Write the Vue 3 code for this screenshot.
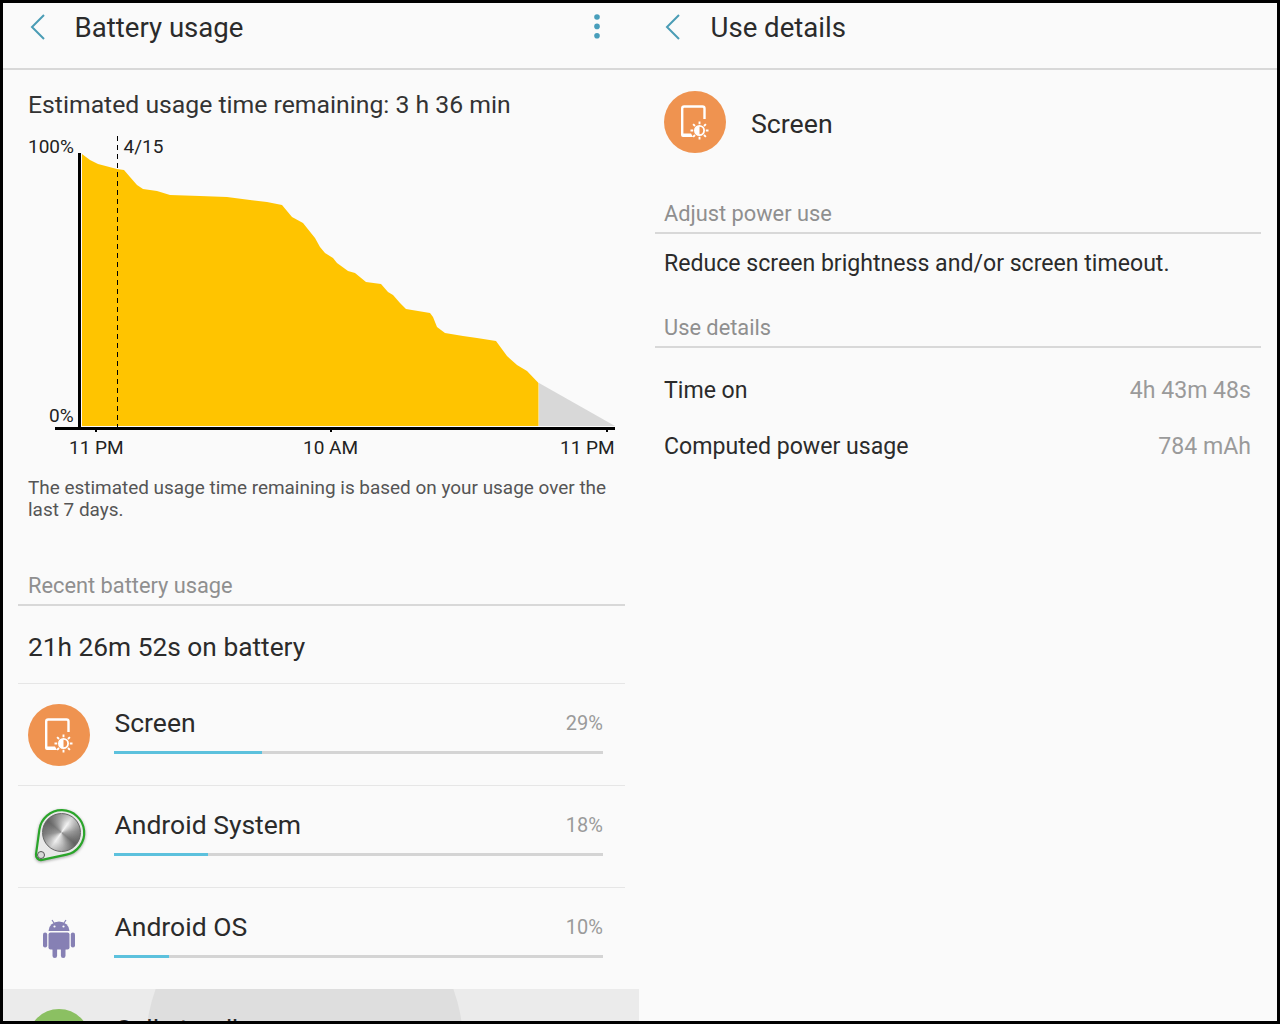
<script setup>
const rows = [
  { name: 'Screen', pct: '29%', w: 148, icon: 'screen' },
  { name: 'Android System', pct: '18%', w: 94, icon: 'system' },
  { name: 'Android OS', pct: '10%', w: 55, icon: 'os' }
]
const yellow = '82,154 90,160 98,164 117,169 124,170 130,177 137,185 143,189 157,191 170,195 200,196 227,197 250,200 267,202 282,205 292,217 303,223 315,238 320,247 325,253 333,258 337,263 348,271 355,273 366,282 381,284 388,292 393,295 400,303 406,309 430,313 433,317 437,327 445,333 463,336 477,338 496,341 507,356 517,365 527,371 538.5,383 538.5,426 82,426'
</script>

<template>
  <div class="frame">
    <section class="pane left">
      <header class="bar">
        <svg class="back" width="16" height="26" viewBox="0 0 16 26"><path d="M14 1 L2 13 L14 25" fill="none" stroke="#4a9cb5" stroke-width="2"/></svg>
        <h1 class="title">Battery usage</h1>
        <svg class="more" width="6" height="25" viewBox="0 0 6 25"><circle cx="3" cy="3" r="2.8" fill="#489ebb"/><circle cx="3" cy="12.4" r="2.8" fill="#489ebb"/><circle cx="3" cy="21.8" r="2.8" fill="#489ebb"/></svg>
      </header>
      <p class="estimate">Estimated usage time remaining: 3 h 36 min</p>
      <div class="chart">
        <svg class="plot" width="636" height="310" viewBox="3 133 636 310">
          <polygon :points="yellow" fill="#ffc400"/>
          <polygon points="539,383 615,426 539,426" fill="#d8d8d8"/>
          <rect x="78" y="153" width="3" height="275" fill="#000"/>
          <rect x="55" y="427" width="560" height="3" fill="#000"/>
          <rect x="95" y="429" width="2" height="3" fill="#000"/>
          <rect x="330" y="429" width="2" height="3" fill="#000"/>
          <rect x="606" y="429" width="2" height="3" fill="#000"/>
          <line x1="117.5" y1="136" x2="117.5" y2="427" stroke="#000" stroke-width="1" stroke-dasharray="5 4"/>
        </svg>
        <span class="lbl l100">100%</span>
        <span class="lbl l0">0%</span>
        <span class="lbl ldate">4/15</span>
        <span class="lbl t1">11 PM</span>
        <span class="lbl t2">10 AM</span>
        <span class="lbl t3">11 PM</span>
      </div>
      <p class="note">The estimated usage time remaining is based on your usage over the last 7 days.</p>
      <div class="sect recent">Recent battery usage</div>
      <div class="onbat">21h 26m 52s on battery</div>
      <div v-for="r in rows" :key="r.name" class="row">
        <div class="ico">
          <svg v-if="r.icon === 'screen'" width="62" height="62" viewBox="0 0 62 62">
            <circle cx="31" cy="31" r="31" fill="#ef9350"/>
            <path d="M18.2 43 V17.5 a2 2 0 0 1 2-2 H38.5 a2 2 0 0 1 2 2 V28" fill="none" stroke="#fff" stroke-width="2.4"/>
            <path d="M17 41 V44 a2 2 0 0 0 2 2 H29 L27 42.5 H19 Z" fill="#fff"/>
            <circle cx="35.5" cy="39.5" r="4.6" fill="#ef9350" stroke="#fff" stroke-width="1.8"/>
            <path d="M35.5 35 a4.5 4.5 0 0 0 0 9 Z" fill="#fff"/>
            <path d="M35.5 30.5 V33.2 M35.5 45.8 V48.5 M26.5 39.5 H29.2 M41.8 39.5 H44.5 M29.1 33.1 L31 35 M40 44 L41.9 45.9 M29.1 45.9 L31 44 M40 35 L41.9 33.1" stroke="#fff" stroke-width="1.9"/>
          </svg>
          <div v-else-if="r.icon === 'system'" class="sys">
            <svg width="62" height="62" viewBox="0 0 62 62">
              <path class="hull" d="M11.4 23.7 A22.5 22.5 0 1 1 38.4 48.7 L14 53.9 A5 5 0 0 1 8 48.3 Z" fill="#e8e8e8" stroke="#2aa52a" stroke-width="2.2"/>
            </svg>
            <div class="disc"></div>
            <div class="knob"></div>
          </div>
          <svg v-else width="62" height="62" viewBox="0 0 62 62">
            <g fill="#8680b4">
              <path d="M20.5 23 a10.5 9.5 0 0 1 21 0 Z"/>
              <rect x="20.5" y="24.5" width="21" height="17" rx="2"/>
              <rect x="15" y="24.5" width="4.2" height="15" rx="2.1"/>
              <rect x="42.8" y="24.5" width="4.2" height="15" rx="2.1"/>
              <rect x="24.5" y="39" width="4.6" height="11" rx="2.3"/>
              <rect x="32.9" y="39" width="4.6" height="11" rx="2.3"/>
            </g>
            <path d="M24 12 L26 15 M38 12 L36 15" stroke="#8680b4" stroke-width="1.2"/>
            <circle cx="26.5" cy="18.5" r="1.1" fill="#fafafa"/><circle cx="35.5" cy="18.5" r="1.1" fill="#fafafa"/>
          </svg>
        </div>
        <div class="info">
          <div class="line"><span class="name">{{ r.name }}</span><span class="pct">{{ r.pct }}</span></div>
          <div class="track"><div class="fill" :style="{ width: r.w + 'px' }"></div></div>
        </div>
      </div>
      <div class="pressed">
        <div class="ripple"></div>
        <div class="greenic"></div>
        <span class="pname">Cell standby</span>
      </div>
    </section>

    <section class="pane right">
      <header class="bar">
        <svg class="back" width="16" height="26" viewBox="0 0 16 26"><path d="M14 1 L2 13 L14 25" fill="none" stroke="#4a9cb5" stroke-width="2"/></svg>
        <h1 class="title">Use details</h1>
      </header>
      <div class="apphead">
        <svg width="62" height="62" viewBox="0 0 62 62">
          <circle cx="31" cy="31" r="31" fill="#ef9350"/>
          <path d="M18.2 43 V17.5 a2 2 0 0 1 2-2 H38.5 a2 2 0 0 1 2 2 V28" fill="none" stroke="#fff" stroke-width="2.4"/>
          <path d="M17 41 V44 a2 2 0 0 0 2 2 H29 L27 42.5 H19 Z" fill="#fff"/>
          <circle cx="35.5" cy="39.5" r="4.6" fill="#ef9350" stroke="#fff" stroke-width="1.8"/>
          <path d="M35.5 35 a4.5 4.5 0 0 0 0 9 Z" fill="#fff"/>
          <path d="M35.5 30.5 V33.2 M35.5 45.8 V48.5 M26.5 39.5 H29.2 M41.8 39.5 H44.5 M29.1 33.1 L31 35 M40 44 L41.9 45.9 M29.1 45.9 L31 44 M40 35 L41.9 33.1" stroke="#fff" stroke-width="1.9"/>
        </svg>
        <span class="appname">Screen</span>
      </div>
      <div class="sect r1">Adjust power use</div>
      <p class="advice">Reduce screen brightness and/or screen timeout.</p>
      <div class="sect r2">Use details</div>
      <div class="kv first"><span>Time on</span><span class="val">4h 43m 48s</span></div>
      <div class="kv"><span>Computed power usage</span><span class="val">784 mAh</span></div>
    </section>
  </div>
</template>

<style>
html, body { margin: 0; background: #000; }
</style>

<style scoped>
.frame {
  box-sizing: border-box;
  width: 1280px;
  height: 1024px;
  background: #000;
  padding: 3px;
  display: flex;
  font-family: Roboto, "Liberation Sans", sans-serif;
  color: #222;
  overflow: hidden;
}
.pane { background: #fafafa; height: 1018px; overflow: hidden; position: relative; }
.left { width: 636px; }
.right { width: 638px; }
.bar {
  height: 65px;
  border-bottom: 2px solid #d8d8d8;
  display: flex;
  align-items: flex-start;
  position: relative;
}
.back { margin: 11px 0 0 27px; flex: none; }
.right .back { margin-left: 26px; }
.title { font-size: 27.6px; font-weight: 400; line-height: 32px; margin: 9px 0 0 28.5px; color: #2b2b2b; }
.right .title { margin-left: 29.5px; }
.more { position: absolute; left: 591px; top: 11px; }
.estimate { margin: 20px 0 0 25px; font-size: 24.75px; line-height: 30px; color: #333; }
.chart { position: relative; height: 310px; margin-top: 13px; }
.plot { position: absolute; left: 0; top: 0; }
.lbl { position: absolute; font-size: 19px; line-height: 22px; color: #222; white-space: nowrap; }
.l100 { left: 25px; top: 3px; }
.l0 { left: 46px; top: 272px; }
.ldate { left: 120.5px; top: 3px; }
.t1 { left: 66px; top: 304px; }
.t2 { left: 300px; top: 304px; }
.t3 { left: 557px; top: 304px; }
.note { margin: 34px 16px 0 25px; font-size: 18.95px; line-height: 22px; color: #555; }
.sect {
  margin: 0 14px 0 15px;
  font-size: 21.8px;
  line-height: 28px;
  color: #8f8f8f;
  border-bottom: 2px solid #d8d8d8;
  padding: 0 0 4px 10px;
}
.recent { margin-top: 51px; }
.onbat { margin: 0 14px 0 15px; padding-left: 10px; height: 77px; line-height: 83px; font-size: 26.3px; color: #2b2b2b; border-bottom: 1px solid #e6e6e6; }
.row { height: 101px; margin: 0 14px 0 15px; padding-left: 10px; border-bottom: 1px solid #e6e6e6; display: flex; align-items: flex-start; }
.ico { width: 62px; height: 62px; margin-top: 20px; flex: none; }
.sys { position: relative; width: 62px; height: 62px; filter: blur(.5px); }
.hull { filter: drop-shadow(0 1.5px 1.5px rgba(0, 0, 0, .35)); }
.disc {
  position: absolute;
  left: 14px;
  top: 7px;
  width: 39px;
  height: 39px;
  box-sizing: border-box;
  border-radius: 50%;
  border: 1px solid #666;
  background:
    radial-gradient(circle, rgba(255,255,255,.25) 0, rgba(255,255,255,0) 40%, rgba(0,0,0,.3) 100%),
    conic-gradient(from 0deg, #b8b8b8, #f3f3f3 35deg, #9a9a9a 85deg, #6f6f6f 130deg, #bdbdbd 175deg, #f0f0f0 215deg, #8d8d8d 265deg, #707070 310deg, #b8b8b8);
}
.knob {
  position: absolute;
  left: 9px;
  top: 45px;
  width: 8px;
  height: 8px;
  box-sizing: border-box;
  border-radius: 50%;
  border: 1.5px solid #555;
  background: #d9d9d9;
}
.info { margin-left: 24px; width: 489px; padding-top: 22px; }
.line { display: flex; justify-content: space-between; align-items: flex-start; height: 44px; }
.name { font-size: 26.5px; line-height: 34px; margin-left: .5px; color: #2b2b2b; }
.pct { font-size: 20px; line-height: 34px; color: #9a9a9a; }
.track { height: 3px; margin-top: .5px; background: #d4d4d4; }
.fill { height: 3px; background: #5cc1dd; }
.pressed { position: absolute; left: 0; right: 0; top: 986px; height: 40px; background: #ebebeb; overflow: hidden; }
.ripple { position: absolute; left: 143px; width: 317px; top: -104.5px; height: 317px; border-radius: 50%; background: #dedede; }
.greenic { position: absolute; left: 25px; top: 20px; width: 62px; height: 62px; border-radius: 50%; background: #8bc062; }
.pname { position: absolute; left: 112px; top: 22px; font-size: 26.5px; line-height: 36px; color: #2b2b2b; }
.apphead { display: flex; align-items: center; padding: 21px 0 0 25px; }
.appname { font-size: 26.7px; margin: 4px 0 0 25px; color: #2b2b2b; }
.r1 { margin: 47px 16px 0 16px; padding-left: 9px; }
.advice { margin: 0 0 0 25px; font-size: 23.1px; line-height: 28px; padding-top: 16px; color: #2b2b2b; }
.r2 { margin: 36px 16px 0 16px; padding-left: 9px; }
.kv { display: flex; justify-content: space-between; margin: 0 26px 0 25px; height: 56px; line-height: 56px; font-size: 23.1px; color: #2b2b2b; }
.kv.first { margin-top: 15px; }
.val { color: #9a9a9a; }
</style>
